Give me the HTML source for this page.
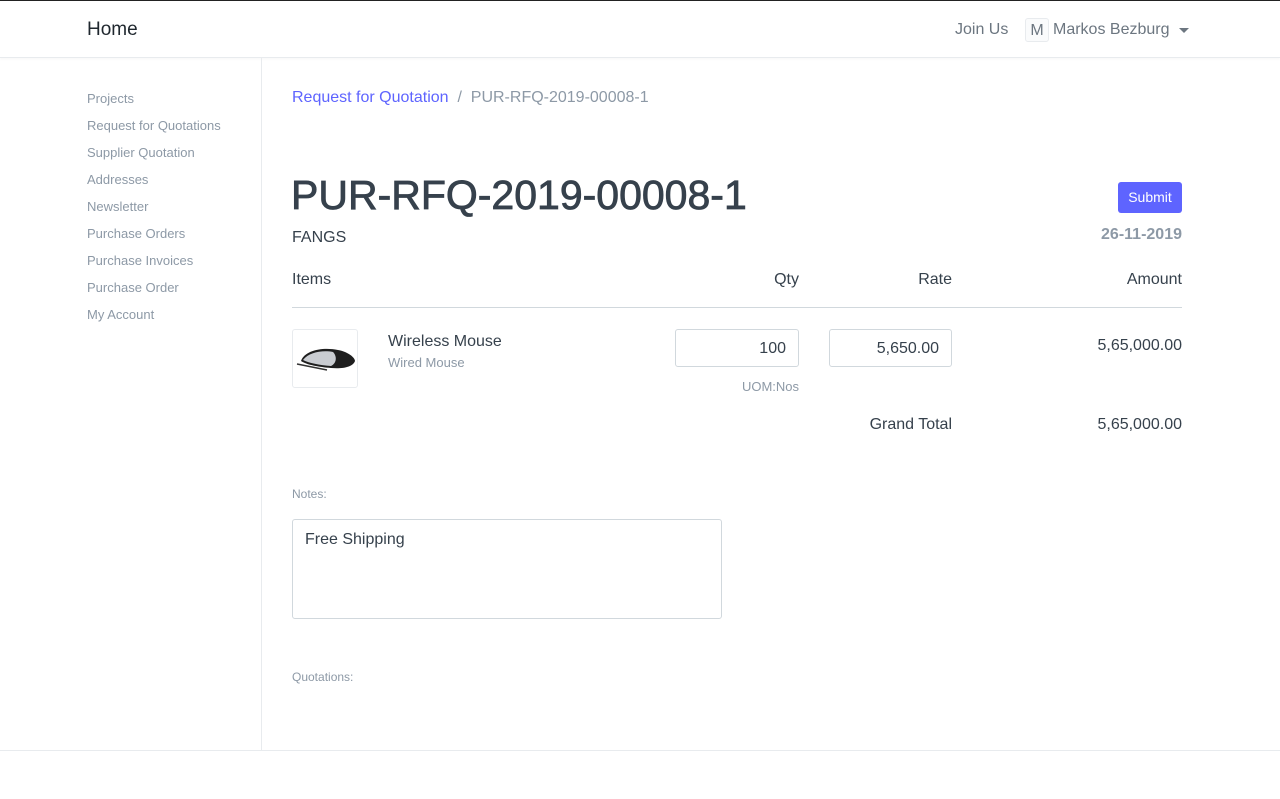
<!DOCTYPE html>
<html><head><style>
*{box-sizing:border-box;margin:0;padding:0}
body{width:1280px;height:799px;font-family:"Liberation Sans",sans-serif;color:#36414c;background:#fff;position:relative;overflow:hidden}
.nav{position:absolute;top:0;left:0;width:1280px;height:58px;border-top:1px solid #222;border-bottom:1px solid #e8ebee;box-shadow:0 1px 3px rgba(0,0,0,.04)}
.abs{position:absolute;white-space:nowrap}
.side a{position:absolute;left:87px;font-size:13px;color:#8d99a6;text-decoration:none}
.inp{position:absolute;border:1px solid #d1d8dd;border-radius:3px;height:38px;font-size:16px;text-align:right;padding:10px 12px;color:#36414c}
</style></head><body>
<div class="nav">
<div class="abs" style="left:87px;top:18px;font-size:19px;color:#1f272e">Home</div>
<div class="abs" style="left:955px;top:20px;font-size:16px;color:#6c7680">Join Us</div>
<div class="abs" style="left:1025px;top:17px;width:24px;height:24px;border:1px solid #e8ebee;border-radius:3px;background:#fafbfc;font-size:16px;color:#6c7680;text-align:center;line-height:23px">M</div>
<div class="abs" style="left:1053px;top:20px;font-size:16px;color:#6c7680">Markos Bezburg</div>
<div class="abs" style="left:1179px;top:27px;width:0;height:0;border-left:5px solid transparent;border-right:5px solid transparent;border-top:5px solid #6c7680"></div>
</div>
<div class="abs" style="left:261px;top:58px;width:1px;height:692px;background:#e8ebee"></div>
<div class="abs" style="left:0;top:750px;width:1280px;height:1px;background:#e8ebee"></div>
<div class="side">
<a style="top:91px">Projects</a><a style="top:118px">Request for Quotations</a><a style="top:145px">Supplier Quotation</a><a style="top:172px">Addresses</a><a style="top:199px">Newsletter</a><a style="top:226px">Purchase Orders</a><a style="top:253px">Purchase Invoices</a><a style="top:280px">Purchase Order</a><a style="top:307px">My Account</a>
</div>
<div class="abs" style="left:292px;top:89px;font-size:16px"><span style="color:#5e64ff">Request for Quotation</span><span style="color:#8d99a6">&nbsp;&nbsp;/&nbsp;&nbsp;PUR-RFQ-2019-00008-1</span></div>
<div class="abs" style="left:291px;top:172px;font-size:41px;color:#36414c;-webkit-text-stroke:0.8px #36414c">PUR-RFQ-2019-00008-1</div>
<div class="abs" style="left:1118px;top:182px;width:64px;height:31px;background:#5e64ff;border-radius:3px;color:#fff;font-size:14px;text-align:center;line-height:31px">Submit</div>
<div class="abs" style="left:292px;top:229px;font-size:16px">FANGS</div>
<div class="abs" style="right:98px;top:226px;font-size:16px;font-weight:bold;color:#8d99a6">26-11-2019</div>
<div class="abs" style="left:292px;top:271px;font-size:16px">Items</div>
<div class="abs" style="right:481px;top:271px;font-size:16px">Qty</div>
<div class="abs" style="right:328px;top:271px;font-size:16px">Rate</div>
<div class="abs" style="right:98px;top:271px;font-size:16px">Amount</div>
<div class="abs" style="left:292px;top:307px;width:890px;height:1px;background:#d1d8dd"></div>
<div class="abs" style="left:292px;top:329px;width:66px;height:59px;border:1px solid #e8ebee;border-radius:3px">
<svg width="64" height="57"><path d="M8 31 C12 20 30 17 45 20 C56 22 62 28 62 31 C60 37 50 39 38 38 C26 37 14 35 8 31Z" fill="#1e1e1e"/><path d="M10 30 C16 22 30 20 40 22 C44 26 44 33 38 36 C26 35 16 33 10 30Z" fill="#c9ccd1"/><path d="M4 34 L34 40" stroke="#333" stroke-width="1.5"/></svg></div>
<div class="abs" style="left:388px;top:333px;font-size:16px">Wireless Mouse</div>
<div class="abs" style="left:388px;top:355px;font-size:13px;color:#8d99a6">Wired Mouse</div>
<div class="inp" style="left:675px;top:329px;width:124px">100</div>
<div class="inp" style="left:829px;top:329px;width:123px">5,650.00</div>
<div class="abs" style="right:481px;top:379px;font-size:13px;color:#8d99a6">UOM:Nos</div>
<div class="abs" style="right:98px;top:337px;font-size:16px">5,65,000.00</div>
<div class="abs" style="right:328px;top:416px;font-size:16px">Grand Total</div>
<div class="abs" style="right:98px;top:416px;font-size:16px">5,65,000.00</div>
<div class="abs" style="left:292px;top:487px;font-size:12px;color:#8d99a6">Notes:</div>
<div class="abs" style="left:292px;top:519px;width:430px;height:100px;border:1px solid #d1d8dd;border-radius:3px;padding:11px 12px;font-size:16px">Free Shipping</div>
<div class="abs" style="left:292px;top:670px;font-size:12px;color:#8d99a6">Quotations:</div>
</body></html>
